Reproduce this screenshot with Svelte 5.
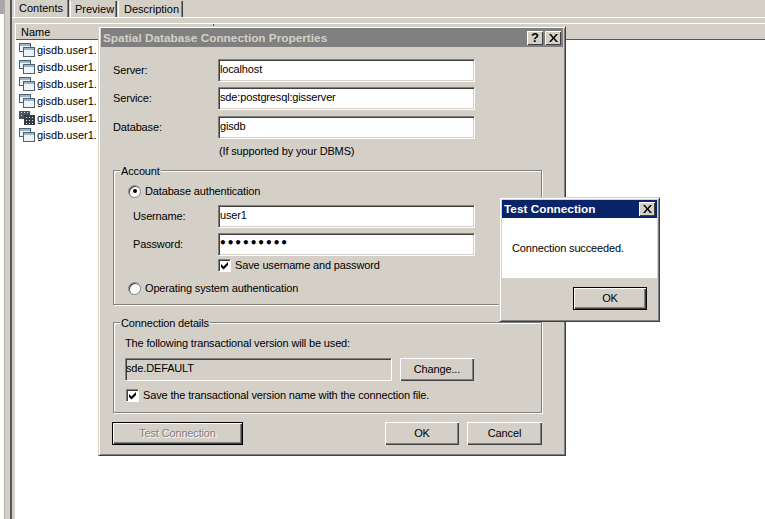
<script>
	const rows = ['f', 'f', 'f', 'f', 'r', 'f'];
</script>

{#snippet frames()}
	<svg class="icon" width="16" height="14" viewBox="0 0 16 14">
		<rect x="0.5" y="0.5" width="11" height="8" fill="#eef3f7" stroke="#4c6272" />
		<rect x="1" y="1" width="10" height="2" fill="#9fb4c4" />
		<rect x="4.5" y="4.5" width="11" height="9" fill="#eef3f7" stroke="#4c6272" />
		<rect x="5" y="5" width="10" height="2" fill="#9fb4c4" />
	</svg>
{/snippet}

{#snippet grid()}
	<svg class="icon" width="16" height="14" viewBox="0 0 16 14">
		<rect x="0" y="0" width="11" height="8" fill="#4a5560" />
		<path d="M2 1.500h1M5 1.500h1M8 1.500h1M2 4.500h1M5 4.500h1M8 4.500h1" stroke="#d8dde2" />
		<rect x="5" y="4" width="11" height="10" fill="#333a42" />
		<path d="M7 6.500h1M10 6.500h1M13 6.500h1M7 9.500h1M10 9.500h1M13 9.500h1M7 12.500h1M10 12.500h1M13 12.500h1" stroke="#e4e7ea" />
	</svg>
{/snippet}

{#snippet check()}
	<span class="checkbox">
		<svg width="9" height="9" viewBox="0 0 9 9"><path d="M1 3 3.500 5.500 8 1V4L3.500 8.500 1 6z" fill="#000" /></svg>
	</span>
{/snippet}

{#snippet closeIcon()}
	<svg width="9" height="8" viewBox="0 0 9 8"><path d="M0 0h2l2.500 3 2.500-3h2L5.500 4 9 8H7L4.500 5 2 8H0l3.500-4z" fill="#000" /></svg>
{/snippet}

<div class="page">
	<div class="side"></div>
	<div class="splitter"></div>
	<div class="pane">
		<div class="tabs">
			<span class="tab active">Contents</span>
			<span class="tab preview">Preview</span>
			<span class="tab description">Description</span>
		</div>
		<div class="tab-body">
			<div class="list">
				<div class="list-head">
					<span class="col-name">Name</span>
				</div>
				{#each rows as kind}
					<div class="list-row">
						{#if kind === 'r'}
							{@render grid()}
						{:else}
							{@render frames()}
						{/if}
						<span>gisdb.user1.</span>
					</div>
				{/each}
			</div>
		</div>
	</div>

	<div class="window props">
		<div class="title inactive">
			<span>Spatial Database Connection Properties</span>
			<span class="caption-btn help">?</span>
			<span class="caption-btn">{@render closeIcon()}</span>
		</div>
		<div class="props-body">
			<div class="top-rows">
				<div class="row"><span class="lbl">Server:</span><div class="field">localhost</div></div>
				<div class="row"><span class="lbl">Service:</span><div class="field">sde:postgresql:gisserver</div></div>
				<div class="row"><span class="lbl">Database:</span><div class="field">gisdb</div></div>
			</div>
			<p class="note">(If supported by your DBMS)</p>

			<div class="group account">
				<span class="legend">Account</span>
				<div class="radio-row"><span class="radio on"></span>Database authentication</div>
				<div class="row sub"><span class="lbl">Username:</span><div class="field">user1</div></div>
				<div class="row sub pass"><span class="lbl">Password:</span><div class="field dots">•••••••••</div></div>
				<div class="check-row save">{@render check()}Save username and password</div>
				<div class="radio-row os"><span class="radio"></span>Operating system authentication</div>
			</div>

			<div class="group details">
				<span class="legend">Connection details</span>
				<div class="info">The following transactional version will be used:</div>
				<div class="version-row">
					<div class="field readonly">sde.DEFAULT</div>
					<button class="btn change">Change...</button>
				</div>
				<div class="check-row">{@render check()}Save the transactional version name with the connection file.</div>
			</div>

			<div class="actions">
				<button class="btn default test" disabled>Test Connection</button>
				<span class="spacer"></span>
				<button class="btn ok">OK</button>
				<button class="btn cancel">Cancel</button>
			</div>
		</div>
	</div>

	<div class="window msg">
		<div class="title">
			<span>Test Connection</span>
			<span class="caption-btn">{@render closeIcon()}</span>
		</div>
		<div class="msg-body">Connection succeeded.</div>
		<div class="msg-foot"><button class="btn default msg-ok">OK</button></div>
	</div>
</div>

<style>
	:global(body) {
		margin: 0;
		background: #fff;
	}

	.page {
		position: relative;
		display: flex;
		width: 765px;
		height: 519px;
		overflow: hidden;
		font-family: 'Liberation Sans', Arial, sans-serif;
		font-size: 11px;
		letter-spacing: -0.15px;
		color: #000;
		background: #fff;
	}

	.side {
		width: 4px;
		flex: none;
		background: #fff;
		border-top: 14px solid #a8a8a8;
		border-right: 1px solid #b8b2a4;
		box-sizing: content-box;
		height: 505px;
	}

	.splitter {
		width: 5px;
		flex: none;
		background: #d4d0c8;
		border-right: 2px solid #555;
	}

	.pane {
		flex: 1;
		display: flex;
		flex-direction: column;
		background: #d4d0c8;
		min-width: 0;
	}

	.tabs {
		display: flex;
		height: 17px;
		padding-left: 2px;
		flex: none;
		letter-spacing: 0;
	}

	.tab {
		box-sizing: border-box;
		height: 16px;
		margin-top: 1px;
		padding-left: 4px;
		line-height: 17px;
		border-left: 1px solid #fff;
		border-right: 1px solid #404040;
		box-shadow: inset -1px 0 0 #808080;
	}

	.tab.active {
		width: 55px;
		height: 18px;
		margin-top: -1px;
		margin-right: 1px;
		line-height: 18px;
		position: relative;
		z-index: 1;
		background: #d4d0c8;
	}

	.preview {
		width: 47px;
		margin-right: 1px;
	}

	.description {
		width: 65px;
		padding-left: 5px;
	}

	.tab-body {
		flex: 1;
		border-top: 1px solid #fff;
		padding: 5px 0 0 3px;
		display: flex;
		min-height: 0;
	}

	.list {
		flex: 1;
		background: #fff;
		border-top: 1px solid #fff;
		border-left: 1px solid #fff;
		min-width: 0;
		letter-spacing: 0;
	}

	.list-head {
		height: 15px;
		background: #d4d0c8;
		border-bottom: 1px solid #555;
		line-height: 16px;
		margin-bottom: 1px;
	}

	.col-name {
		display: block;
		width: 198px;
		height: 15px;
		padding-left: 5px;
		box-sizing: border-box;
		border-right: 1px solid #555;
	}

	.list-row {
		display: flex;
		align-items: center;
		height: 17px;
		padding-left: 3px;
		gap: 2px;
		white-space: nowrap;
	}

	.icon {
		flex: none;
	}

	.window {
		position: absolute;
		box-sizing: border-box;
		background: #d4d0c8;
		border: 1px solid;
		border-color: #d4d0c8 #404040 #404040 #d4d0c8;
		box-shadow: inset 1px 1px 0 #fff, inset -1px -1px 0 #808080;
		padding: 2px;
	}

	.props {
		left: 98px;
		top: 26px;
		width: 468px;
		height: 430px;
		padding: 1px 2px 2px 2px;
	}

	.msg {
		left: 499px;
		top: 197px;
		width: 161px;
		height: 125px;
		display: flex;
		flex-direction: column;
	}

	.title {
		display: flex;
		align-items: center;
		gap: 2px;
		height: 18px;
		padding: 0 2px 0 2px;
		background: #0a246a;
		color: #fff;
		font-size: 11.8px;
		letter-spacing: 0;
		font-weight: bold;
		flex: none;
	}

	.title > span:first-child {
		flex: 1;
	}

	.title.inactive {
		height: 19px;
		background: #808080;
		color: #d4d0c8;
	}

	.caption-btn {
		display: flex;
		align-items: center;
		justify-content: center;
		width: 16px;
		height: 14px;
		background: #d4d0c8;
		color: #000;
		font-size: 13px;
		box-shadow: inset 1px 1px 0 #fff, inset -1px -1px 0 #404040;
	}

	.props-body {
		padding: 12px 0 0 12px;
	}

	.top-rows {
		display: flex;
		flex-direction: column;
		gap: 6px;
	}

	.row {
		display: flex;
		align-items: center;
	}

	.lbl {
		width: 105px;
		flex: none;
	}

	.field {
		box-sizing: border-box;
		width: 256px;
		height: 22px;
		padding: 0 2px;
		background: #fff;
		line-height: 21px;
		white-space: nowrap;
		box-shadow: inset 1px 1px 0 #808080, inset 2px 2px 0 #404040, inset -1px -1px 0 #d4d0c8, 1px 1px 0 #fff;
	}

	.top-rows .row:last-child {
		margin-top: 1px;
	}

	.note {
		margin: 6px 0 0 106px;
		height: 14px;
		line-height: 14px;
	}

	.group {
		position: relative;
		box-sizing: border-box;
		width: 429px;
		border: 1px solid #808080;
		box-shadow: inset 1px 1px 0 #fff, 1px 1px 0 #fff;
	}

	.legend {
		position: absolute;
		left: 6px;
		top: -7px;
		padding: 0 1px;
		line-height: 14px;
		background: #d4d0c8;
	}

	.account {
		height: 135px;
		margin-top: 12px;
		padding-top: 13px;
	}

	.radio-row,
	.check-row {
		display: flex;
		align-items: center;
		height: 14px;
		white-space: nowrap;
	}

	.radio-row {
		padding-left: 14px;
		gap: 4px;
	}

	.radio {
		width: 13px;
		height: 13px;
		box-sizing: border-box;
		border-radius: 50%;
		background: #fff;
		border: 1px solid #808080;
		box-shadow: inset 1px 1px 0 #404040;
		display: flex;
		align-items: center;
		justify-content: center;
	}

	.radio.on::after {
		content: '';
		width: 4px;
		height: 4px;
		border-radius: 50%;
		background: #000;
	}

	.sub {
		padding-left: 19px;
		margin-top: 7px;
	}

	.sub .lbl {
		width: 85px;
	}

	.pass {
		margin-top: 6px;
	}

	.dots {
		padding: 0 1px;
		font-size: 12px;
		letter-spacing: 0;
		font-family: 'DejaVu Sans', sans-serif;
		font-weight: bold;
	}

	.save {
		margin: 3px 0 0 104px;
		gap: 5px;
	}

	.os {
		margin-top: 9px;
	}

	.checkbox {
		box-sizing: border-box;
		display: flex;
		align-items: center;
		justify-content: center;
		width: 12px;
		height: 12px;
		background: #fff;
		box-shadow: inset 1px 1px 0 #808080, inset 2px 2px 0 #404040, 1px 1px 0 #fff;
	}

	.details {
		height: 91px;
		margin-top: 17px;
		padding: 13px 0 0 11px;
	}

	.info {
		height: 14px;
		line-height: 14px;
		white-space: nowrap;
	}

	.version-row {
		display: flex;
		align-items: flex-start;
		gap: 9px;
		margin-top: 8px;
	}

	.field.readonly {
		width: 266px;
		padding: 0 1px;
		background: #d4d0c8;
	}

	.btn {
		box-sizing: border-box;
		height: 23px;
		padding: 0 0 2px;
		border: none;
		border-radius: 0;
		background: #d4d0c8;
		font: inherit;
		letter-spacing: inherit;
		color: #000;
		box-shadow: inset 1px 1px 0 #fff, inset -1px -1px 0 #404040, inset -2px -2px 0 #808080;
	}

	.change {
		width: 74px;
	}

	.details .check-row {
		margin: 7px 0 0 1px;
		gap: 5px;
	}

	.actions {
		display: flex;
		gap: 8px;
		margin-top: 9px;
		margin-left: -1px;
		width: 430px;
	}

	.spacer {
		flex: 1;
	}

	.ok {
		width: 74px;
	}

	.cancel {
		width: 75px;
	}

	.test {
		width: 131px;
	}

	.btn.default {
		border: 1px solid #000;
	}

	.test:disabled {
		color: #808080;
		text-shadow: 1px 1px 0 #fff;
	}

	.msg-body {
		height: 60px;
		flex: none;
		background: #fff;
		line-height: 60px;
		padding-left: 10px;
		white-space: nowrap;
	}

	.msg-foot {
		flex: 1;
		display: flex;
		justify-content: flex-end;
		align-items: flex-start;
		padding: 9px 10px 0 0;
	}

	.msg-ok {
		width: 74px;
	}
</style>
